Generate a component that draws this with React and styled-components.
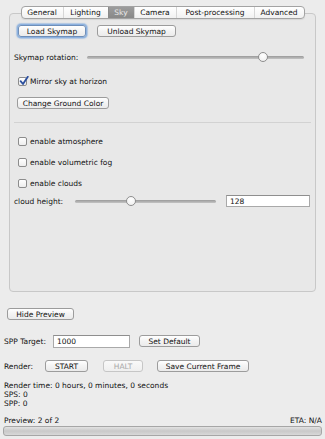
import React from 'react';
import styled, { createGlobalStyle, css } from 'styled-components';

const GlobalStyle = createGlobalStyle`
  html, body {
    margin: 0;
    padding: 0;
    background: #ececec;
  }
  body {
    font-family: "DejaVu Sans", "Liberation Sans", sans-serif;
    font-size: 7.5px;
    color: #111;
  }
`;

const Window = styled.div`
  width: 325px;
  height: 439px;
  display: flex;
  flex-direction: column;
  background: #ececec;
  overflow: hidden;
`;

const TabArea = styled.div`
  display: flex;
  flex-direction: column;
  padding: 6px 9px 0 9px;
`;

const TabStrip = styled.div`
  position: relative;
  z-index: 1;
  align-self: center;
  display: flex;
  height: 13px;
  margin-bottom: -6px;
  border: 1px solid #a3a3a3;
  border-radius: 4px;
  background: linear-gradient(#ffffff, #f1f1f1);
  box-sizing: border-box;
  overflow: hidden;
  box-shadow: 0 1px 1px rgba(0, 0, 0, 0.08);
`;

const Tab = styled.div`
  width: ${(p) => p.$w}px;
  display: flex;
  align-items: center;
  justify-content: center;
  white-space: nowrap;
  box-sizing: border-box;
  border-left: 1px solid #d6d6d6;
  &:first-child {
    border-left: none;
  }
  ${(p) =>
    p.$active &&
    css`
      background: linear-gradient(#9c9c9c, #888888);
      color: #e8e8e8;
      border-left-color: #8a8a8a;
    `}
`;

const Panel = styled.div`
  height: 279px;
  box-sizing: border-box;
  border: 1px solid #c8c8c8;
  border-radius: 4px;
  background: #e8e8e8;
  display: flex;
  flex-direction: column;
  padding: 10px 4px 0 4px;
`;

const Row = styled.div`
  display: flex;
  align-items: center;
  height: ${(p) => p.$h || 14}px;
  margin-top: ${(p) => p.$mt || 0}px;
  padding-left: ${(p) => p.$pl || 0}px;
  gap: ${(p) => p.$gap || 0}px;
  ${(p) =>
    p.$spread &&
    css`
      justify-content: space-between;
    `}
`;

const Button = styled.div`
  width: ${(p) => p.$w}px;
  height: 12px;
  box-sizing: border-box;
  display: flex;
  align-items: center;
  justify-content: center;
  white-space: nowrap;
  border: 1px solid #9c9c9c;
  border-radius: 3px;
  background: linear-gradient(#ffffff, #f3f3f3 50%, #ebebeb);
  margin-left: ${(p) => p.$ml || 0}px;
  ${(p) =>
    p.$focused &&
    css`
      box-shadow: 0 0 0 1px #8cb1df, 0 0 1px 2px rgba(120, 165, 220, 0.5);
      border-color: #6f8fb9;
    `}
  ${(p) =>
    p.$disabled &&
    css`
      color: #a8a8a8;
      border-color: #c6c6c6;
      background: linear-gradient(#f9f9f9, #efefef);
    `}
`;

const Label = styled.span`
  width: ${(p) => (p.$w ? `${p.$w}px` : 'auto')};
  flex-shrink: 0;
  white-space: nowrap;
`;

const SliderTrack = styled.div`
  position: relative;
  width: ${(p) => p.$w}px;
  height: 3px;
  border-radius: 2px;
  background: linear-gradient(#9a9a9a, #c4c4c4);
  flex-shrink: 0;
`;

const SliderThumb = styled.div`
  position: absolute;
  top: 50%;
  width: 10px;
  height: 10px;
  margin-left: -5px;
  margin-top: -5px;
  border-radius: 50%;
  box-sizing: border-box;
  border: 1px solid #8e8e8e;
  background: radial-gradient(circle at 50% 35%, #ffffff, #ececec);
`;

const CheckWrap = styled.label`
  display: flex;
  align-items: center;
  gap: 3px;
  padding-left: 4px;
  white-space: nowrap;
`;

const Box = styled.span`
  position: relative;
  width: 9px;
  height: 9px;
  box-sizing: border-box;
  border: 1px solid #8c8c8c;
  border-radius: 2px;
  background: linear-gradient(#ffffff, #ededed);
  flex-shrink: 0;
  svg {
    position: absolute;
    left: 0;
    top: -2px;
  }
`;

const Separator = styled.div`
  height: 1px;
  background: #d2d2d2;
  margin-top: 12px;
`;

const Field = styled.div`
  width: ${(p) => p.$w}px;
  height: ${(p) => p.$h || 12}px;
  box-sizing: border-box;
  border: 1px solid #a9a9a9;
  border-top-color: #8e8e8e;
  background: #ffffff;
  display: flex;
  align-items: center;
  padding-left: 3px;
  flex-shrink: 0;
  margin-left: ${(p) => p.$ml || 0}px;
`;

const Bottom = styled.div`
  display: flex;
  flex-direction: column;
  padding: 0 3px 0 4px;
`;

const Status = styled.div`
  margin-top: 8px;
  line-height: 9px;
  display: flex;
  flex-direction: column;
`;

const Progress = styled.div`
  height: 10px;
  margin: 2px 0 0 -1px;
  box-sizing: border-box;
  border: 1px solid #a6a6a6;
  border-radius: 3px;
  background: linear-gradient(#e2e2e2, #c9c9c9 50%, #d8d8d8);
`;

const Slider = ({ w, pos }) => (
  <SliderTrack $w={w}>
    <SliderThumb style={{ left: `${pos * 100}%` }} />
  </SliderTrack>
);

const Check = ({ checked, children }) => (
  <CheckWrap>
    <Box>
      {checked && (
        <svg width="10" height="10" viewBox="0 0 10 10">
          <path d="M1.6 5.2 L4 8 L8.8 0.8" fill="none" stroke="#2b4f9e" strokeWidth="1.8" strokeLinecap="round" strokeLinejoin="round" />
        </svg>
      )}
    </Box>
    {children}
  </CheckWrap>
);

const tabs = [
  { name: 'General', w: 41 },
  { name: 'Lighting', w: 45 },
  { name: 'Sky', w: 26, active: true },
  { name: 'Camera', w: 42 },
  { name: 'Post-processing', w: 78 },
  { name: 'Advanced', w: 50 },
];

export default function App() {
  return (
    <Window>
      <GlobalStyle />
      <TabArea>
        <TabStrip>
          {tabs.map((t) => (
            <Tab key={t.name} $w={t.w} $active={t.active}>
              {t.name}
            </Tab>
          ))}
        </TabStrip>
        <Panel>
          <Row $pl={4} $gap={11}>
            <Button $w={68} $focused>Load Skymap</Button>
            <Button $w={79}>Unload Skymap</Button>
          </Row>
          <Row $mt={12}>
            <Label $w={73}>Skymap rotation:</Label>
            <Slider w={217} pos={0.81} />
          </Row>
          <Row $mt={10}>
            <Check checked>Mirror sky at horizon</Check>
          </Row>
          <Row $mt={8}>
            <Button $w={92} $ml={3}>Change Ground Color</Button>
          </Row>
          <Separator />
          <Row $mt={11}>
            <Check>enable atmosphere</Check>
          </Row>
          <Row $mt={7}>
            <Check>enable volumetric fog</Check>
          </Row>
          <Row $mt={7}>
            <Check>enable clouds</Check>
          </Row>
          <Row $mt={4}>
            <Label $w={61}>cloud height:</Label>
            <Slider w={141} pos={0.4} />
            <Field $w={84} $ml={10}>128</Field>
          </Row>
        </Panel>
      </TabArea>
      <Bottom>
        <Row $mt={15}>
          <Button $w={67} $ml={3}>Hide Preview</Button>
        </Row>
        <Row $mt={13}>
          <Label $w={49}>SPP Target:</Label>
          <Field $w={77} $h={13}>1000</Field>
          <Button $w={61} $ml={9}>Set Default</Button>
        </Row>
        <Row $mt={11}>
          <Label $w={41}>Render:</Label>
          <Button $w={43}>START</Button>
          <Button $w={40} $ml={15} $disabled>HALT</Button>
          <Button $w={92} $ml={14}>Save Current Frame</Button>
        </Row>
        <Status>
          <span>Render time: 0 hours, 0 minutes, 0 seconds</span>
          <span>SPS: 0</span>
          <span>SPP: 0</span>
        </Status>
        <Row $mt={8} $h={8} $spread>
          <span>Preview: 2 of 2</span>
          <span>ETA: N/A</span>
        </Row>
        <Progress />
      </Bottom>
    </Window>
  );
}
